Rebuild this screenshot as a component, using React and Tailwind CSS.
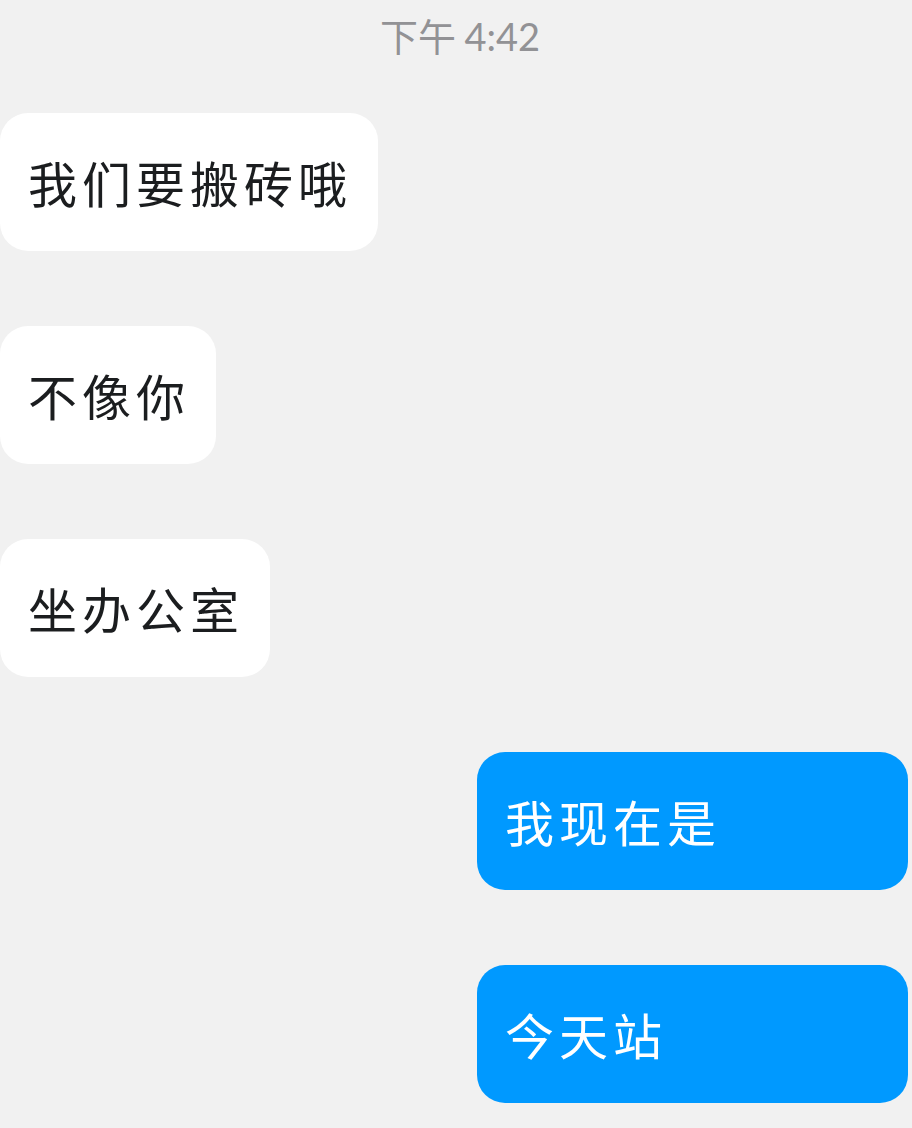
const messages = [
  { id: 1, text: "我们要搬砖哦", mine: false },
  { id: 2, text: "不像你", mine: false },
  { id: 3, text: "坐办公室", mine: false },
  { id: 4, text: "我现在是", mine: true },
  { id: 5, text: "今天站", mine: true },
];

function Bubble({ text, mine }) {
  return (
    <li className={mine ? "flex justify-end pr-1" : "flex justify-start"}>
      <p
        className={
          mine
            ? "w-[431px] rounded-[28px] bg-[#0099ff] px-7 py-8 text-white"
            : "rounded-[28px] bg-white pl-7 pr-[26px] py-8 text-[#1b1d1f]"
        }
      >
        {text}
      </p>
    </li>
  );
}

export default function App() {
  return (
    <main className="min-h-screen bg-[#f1f1f1] pt-[5px] pb-6 font-['Noto_Sans_CJK_SC',sans-serif]">
      <time className="block pl-2 text-center text-[38px] leading-[60px] text-[#929295]" dateTime="16:42">
        下午 <span className="font-['Lato','Noto_Sans_CJK_SC',sans-serif]">4:42</span>
      </time>
      <ul className="mt-[47px] flex flex-col gap-[75px] text-[49px] leading-[74px] tracking-[5px]">
        {messages.map((m) => (
          <Bubble key={m.id} text={m.text} mine={m.mine} />
        ))}
      </ul>
    </main>
  );
}
